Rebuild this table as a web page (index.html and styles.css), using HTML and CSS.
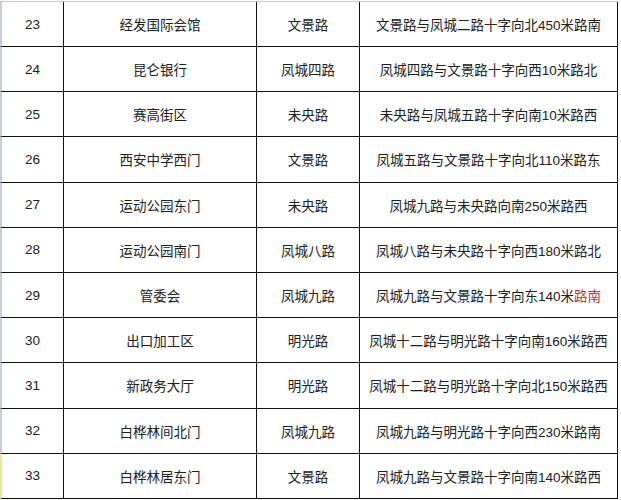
FILE: index.html
```html
<!DOCTYPE html>
<html lang="zh-CN">
<head>
<meta charset="utf-8">
<title>站点列表</title>
<link rel="stylesheet" href="styles.css">
</head>
<body>
<div class="sheet">
  <div class="row first">
    <div class="cell num">23</div><div class="cell">经发国际会馆</div><div class="cell">文景路</div><div class="cell">文景路与凤城二路十字向北450米路南</div>
  </div>
  <div class="row">
    <div class="cell num">24</div><div class="cell">昆仑银行</div><div class="cell">凤城四路</div><div class="cell">凤城四路与文景路十字向西10米路北</div>
  </div>
  <div class="row">
    <div class="cell num">25</div><div class="cell">赛高街区</div><div class="cell">未央路</div><div class="cell">未央路与凤城五路十字向南10米路西</div>
  </div>
  <div class="row">
    <div class="cell num">26</div><div class="cell">西安中学西门</div><div class="cell">文景路</div><div class="cell">凤城五路与文景路十字向北110米路东</div>
  </div>
  <div class="row">
    <div class="cell num">27</div><div class="cell">运动公园东门</div><div class="cell">未央路</div><div class="cell">凤城九路与未央路向南250米路西</div>
  </div>
  <div class="row">
    <div class="cell num">28</div><div class="cell">运动公园南门</div><div class="cell">凤城八路</div><div class="cell">凤城八路与未央路十字向西180米路北</div>
  </div>
  <div class="row">
    <div class="cell num">29</div><div class="cell">管委会</div><div class="cell">凤城九路</div><div class="cell">凤城九路与文景路十字向东140米<span class="red">路南</span></div>
  </div>
  <div class="row">
    <div class="cell num">30</div><div class="cell">出口加工区</div><div class="cell">明光路</div><div class="cell">凤城十二路与明光路十字向南160米路西</div>
  </div>
  <div class="row">
    <div class="cell num">31</div><div class="cell">新政务大厅</div><div class="cell">明光路</div><div class="cell">凤城十二路与明光路十字向北150米路西</div>
  </div>
  <div class="row">
    <div class="cell num">32</div><div class="cell">白桦林间北门</div><div class="cell">凤城九路</div><div class="cell">凤城九路与明光路十字向西230米路南</div>
  </div>
  <div class="row active">
    <div class="cell num">33</div><div class="cell">白桦林居东门</div><div class="cell">文景路</div><div class="cell">凤城九路与文景路十字向南140米路西</div>
  </div>
</div>
</body>
</html>
```

FILE: styles.css
```css
html, body {
  margin: 0;
  padding: 0;
  background: #ffffff;
}

body {
  font-family: "Liberation Sans", "Noto Sans CJK SC", sans-serif;
  font-size: 13.5px;
  color: #202020;
}

.sheet {
  margin-top: 1px;
  border-top: 1px solid #c3cbd9;
  width: 618px;
}

.row {
  display: grid;
  grid-template-columns: 64px 193px 103px 258px;
  height: 45.2px;
}

.row.first {
  height: 45px;
}

.cell {
  box-sizing: border-box;
  border-right: 1px solid #111;
  border-bottom: 1px solid #111;
  display: flex;
  align-items: center;
  justify-content: center;
  white-space: nowrap;
  overflow: hidden;
}

.cell.num {
  border-left: 2px solid #c6cedc;
}

.row.active .cell.num {
  border-left-color: #f1e49c;
}

.red {
  color: #cc2e35;
}
```
